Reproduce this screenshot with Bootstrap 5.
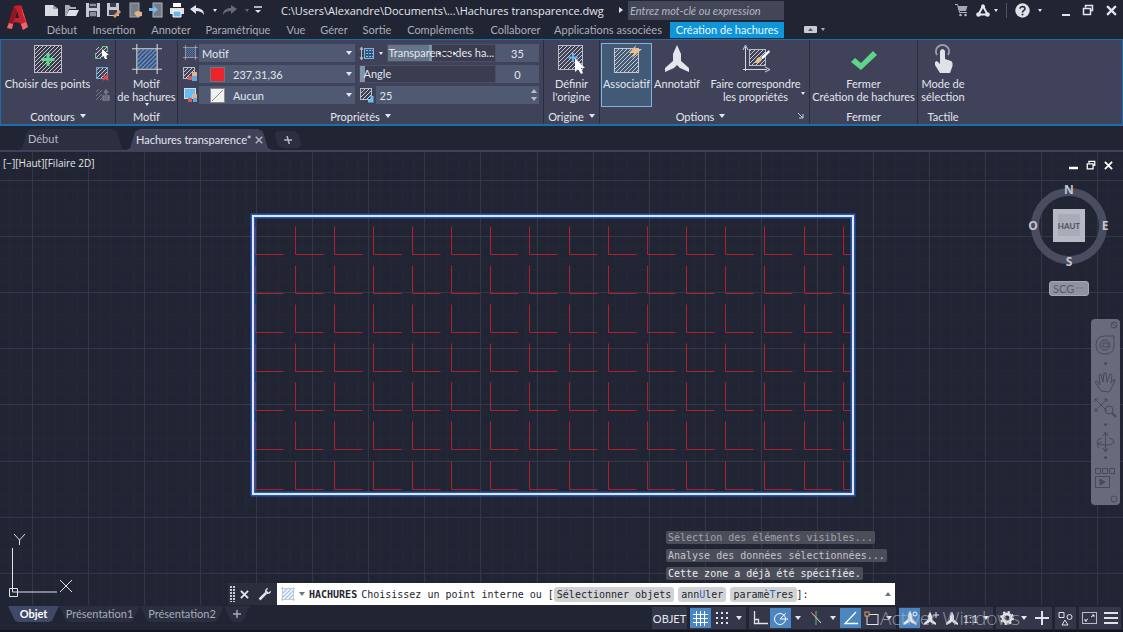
<!DOCTYPE html>
<html lang="fr">
<head>
<meta charset="utf-8">
<meta name="viewport" content="width=device-width, initial-scale=1">
<title>Hachures transparence.dwg</title>
<link href="https://cdn.jsdelivr.net/npm/bootstrap@5.3.0/dist/css/bootstrap.min.css" rel="stylesheet">
<style>
:root{--dark:#212433;--panel:#3f4258;--field:#4f5972;--txt:#e3e6ec;--dim:#a9aebb;--blue:#1b6fa9}
body{background:var(--dark);color:var(--txt);font-family:Lato,"Open Sans",sans-serif;font-size:11px;line-height:13px}
button,input,select{font:inherit;color:inherit;background:none;border:0;padding:0;margin:0;border-radius:0}
a{color:inherit;text-decoration:none}
svg{display:block;flex:none}
.caret{width:0;height:0;border:3px solid transparent;border-top:4px solid currentColor;border-bottom:0;flex:none}
.caret.sm{border-width:2px;border-top-width:3px;border-bottom:0}
.app-top{height:39px}
.logo-box{width:44px;padding-left:5px}
.title-row{height:20px}
.quick{width:229px;gap:5px}
.doc-title{font-family:"Open Sans","Noto Sans",sans-serif;white-space:nowrap;width:338px}
.search-box{background:#424656;width:156px;height:19px;padding-left:2px;font-style:italic}
.search-box::placeholder{color:#b4b8c0;opacity:1}
.menu-row{height:19px;color:var(--dim)}
.menu-row a{white-space:nowrap;height:16px;line-height:15px;text-align:center}
.menu-row a.on{background:#0f96d8;color:#e8f5fd;width:114px}
.sys{gap:12px;padding-right:6px}
.ribbon{height:87px;background:var(--panel);border:1px solid var(--blue);border-bottom-width:2px}
.pane{border-right:1px solid #2a2d3d;height:84px;flex:none}
.pane-title{height:16px;gap:5px}
.pane-body{height:68px}
.tool{display:flex;flex-direction:column;align-items:center;white-space:nowrap;padding-top:4px;text-align:center}
.tool svg{margin-bottom:3px}
.opts{padding:3px 0 0 1px}
.opts .tool{padding-top:1px}
.opts .tool.on{background:#435a77;border:1px solid #7fb4e2;height:64px;padding-top:0;width:51px}
.field{background:var(--field);height:18px}
.pick{appearance:none;height:18px;background:var(--field);padding:0 3px;width:100%}
.drop{position:relative;display:flex;align-items:center;flex:1 1 0}
.drop .caret{position:absolute;right:3px;top:7px}
.prop-row{height:18px;margin-bottom:3px}
.swatch{width:15px;height:15px;margin-left:11px;flex:none}
.slide{position:relative;height:18px;background:#3a3c50;border:1px solid #4b4f66;flex:1 1 0;min-width:0;overflow:hidden}
.slide input{appearance:none;position:absolute;inset:0;width:100%;height:16px}
.slide input::-webkit-slider-thumb{appearance:none;width:5px;height:16px;background:#7f93ab}
.slide label{position:relative;pointer-events:none;white-space:nowrap;line-height:15px;padding-left:1px}
.slide .fill{position:absolute;top:0;left:0;height:100%;background:#667489}
.slide .grab{position:absolute;top:0;left:48px;pointer-events:none}
.num{background:var(--field);height:18px;text-align:center;width:43px;flex:none}
.file-tabs{height:26px;border-bottom:2px solid var(--panel);padding-left:18px}
.file-tabs .ftab{height:21px;align-self:end;line-height:19px;white-space:nowrap;background:#2c2f40;clip-path:polygon(0 100%,4px 92%,9px 12%,14px 0,calc(100% - 14px) 0,calc(100% - 9px) 12%,calc(100% - 4px) 92%,100% 100%)}
.file-tabs .ftab.on{background:var(--panel)}
.file-tabs .ftab.add{clip-path:none;height:17px;margin-bottom:2px;border-radius:5px;transform:skewX(15deg)}
.space{position:relative;flex:1 1 0;min-height:0;overflow:hidden}
.space>.draw{position:absolute;inset:0;width:100%;height:100%}
.view-label{position:absolute;left:3px;top:5px;font-family:"Open Sans",sans-serif;font-size:10px}
.win-btns{position:absolute;right:10px;top:8px;gap:8px}
.compass{position:absolute;right:11px;top:25px}
.scg{position:absolute;right:34px;top:129px;width:40px;height:15px;border-radius:3px;background:#90929f;border:1px solid #a6a8b2;color:#555968;line-height:12px;text-align:left;padding-left:3px}
.navbox{position:absolute;right:3px;top:167px;width:29px;border-radius:4px;background:#686b7b}
.mono{font-family:"DejaVu Sans Mono","Liberation Mono",monospace;font-size:10px}
.cmd-wrap{position:absolute;left:228px;right:228px;bottom:0}
.hist{padding-left:438px;gap:5px;margin-bottom:3px}
.hist span{background:#4b4d59;border-radius:2px;height:13px;line-height:13px;padding:0 2px;white-space:pre}
.cmd{height:22px;background:#2b2e3c;gap:5px;padding-left:2px}
.cmd-line{background:#fff;color:#23262f;height:22px;white-space:pre;padding-left:4px}
.cmd-line button{background:#d2d3d5;border-radius:3px;padding:0 3px;height:15px;line-height:13px}
.cmd-line i{font-style:normal;color:#2c66c4}
.flip{transform:rotate(180deg)}
.foot{height:27px;border-bottom:2px solid #14151f}
.ltab{height:16px;line-height:15px;margin-top:1px;background:#2b2e3e;color:#a6acb9;clip-path:polygon(0 0,100% 0,calc(100% - 7px) 92%,calc(100% - 10px) 100%,10px 100%,7px 92%)}
.ltab.on{background:#3f4965;color:#fff;font-weight:700}
.stat{position:relative;padding-top:2px;margin-right:2px;gap:3px}
.grp{background:#34374a;height:22px;display:flex;align-items:center}
.grp button{height:20px;width:21px;display:flex;align-items:center;justify-content:center;flex:none}
.grp button.on{background:#4c86c0}
.grp button.nar{width:14px}
.grp button.mid{width:17px}
.grp button.wide{width:35px}
.water{position:absolute;left:228px;top:2px;font-family:"Open Sans",sans-serif;font-weight:300;font-size:19px;line-height:22px;color:#b2b5bb;opacity:.75;white-space:nowrap;pointer-events:none}
</style>
</head>
<body class="vh-100 d-flex flex-column overflow-hidden">
<svg width="0" height="0" class="position-absolute" aria-hidden="true">
  <defs>
    <pattern id="ht" width="4" height="4" patternUnits="userSpaceOnUse"><path d="M-1 5L5-1M-1 1L1-1M3 5L5 3" stroke="#c9ccd3" stroke-width="1"/></pattern>
    <pattern id="hb" width="4" height="4" patternUnits="userSpaceOnUse"><path d="M-1 5L5-1M-1 1L1-1M3 5L5 3" stroke="#5d9be0" stroke-width="1.3"/></pattern>
    <symbol id="boxh" viewBox="0 0 30 30"><rect x="1.5" y="1.5" width="27" height="27" fill="#3a3c4d"/><rect x="1.5" y="1.5" width="27" height="27" fill="url(#ht)" stroke="#b9bcc4"/></symbol>
    <symbol id="minih" viewBox="0 0 16 16"><rect x="1.5" y="1.5" width="11" height="11" fill="url(#ht)" stroke="#b9bcc4"/></symbol>
    <symbol id="frame" viewBox="0 0 28 28"><rect x="5" y="5" width="18" height="18" fill="url(#hb)"/><path d="M4.500 0V28M23.500 0V28M0 4.500H28M0 23.500H28" stroke="#d5d8de"/></symbol>
    <symbol id="annot" viewBox="0 0 26 30"><path d="M13 1L17 10V17L25 24V28L16 24L13 21L10 24L1 28V24L9 17V10Z" fill="currentColor"/></symbol>
    <symbol id="floppy" viewBox="0 0 16 16"><path d="M1 1H15V15H1Z" fill="#c5c8d0"/><path d="M4 1H12V6H4ZM4 9H12V15H4Z" fill="#3b3e4c"/><path d="M5 11H11M5 13H11M5 3H11" stroke="#dfe2e8"/></symbol>
    <symbol id="rest" viewBox="0 0 12 12"><path d="M3.500 3.500V1.500H10.500V6.500H8.500M1.500 4.500H8.500V10.500H1.500Z" fill="none" stroke="currentColor" stroke-width="1.5"/></symbol>
    <symbol id="ex" viewBox="0 0 10 10"><path d="M1 1L9 9M9 1L1 9" stroke="currentColor" stroke-width="2"/></symbol>
  </defs>
</svg>

<header class="app-top d-flex">
  <div class="logo-box pt-1">
    <svg width="26" height="28" viewBox="0 0 26 28"><path d="M9 2L16 1L23 23L18 26L15 19L9 18L7 25L2 24Z" fill="#c5202b"/><path d="M12 7L14 14L10 14Z" fill="#212433"/><path d="M9 2L12 7L8 19L2 24Z" fill="#8f1620"/><path d="M16 1L18 11L23 23L20 14Z" fill="#ef5a5f"/><path d="M2 24L4 19L8 20L7 25ZM18 26L16 20L21 18L23 23Z" fill="#e06a6f"/></svg>
  </div>
  <div class="flex-grow-1">
    <div class="title-row d-flex align-items-center">
      <div class="quick d-flex align-items-center">
        <button aria-label="Nouveau"><svg width="15" height="16" viewBox="0 0 15 16"><path d="M1 3H9L14 7V14H1Z" fill="#d9dbe0"/><path d="M9 3V7H14Z" fill="#9da0aa"/></svg></button>
        <button aria-label="Ouvrir"><svg width="16" height="16" viewBox="0 0 16 16"><path d="M1 14V3H5L7 5H12V7H5L2 14Z" fill="#a9acb5"/><path d="M5 8H15L12 14H2Z" fill="#dfe1e6"/></svg></button>
        <button aria-label="Enregistrer"><svg width="16" height="16"><use href="#floppy"/></svg></button>
        <button aria-label="Enregistrer sous"><svg width="16" height="16" viewBox="0 0 16 16"><path d="M1 1H13V14H1Z" fill="#c5c8d0"/><path d="M4 1H10V5H4ZM3 8H11V13H3Z" fill="#3b3e4c"/><path d="M7 14L13 8L15 10L9 16Z" fill="#d9a066"/></svg></button>
        <button aria-label="Ouvrir du mobile"><svg width="16" height="16" viewBox="0 0 16 16"><rect x="3" y="1" width="9" height="14" fill="#777b88" stroke="#a4a8b2"/><path d="M7 11L10 9L15 10V14L10 15Z" fill="#e0b48a"/></svg></button>
        <button aria-label="Enregistrer sur mobile"><svg width="16" height="16" viewBox="0 0 16 16"><rect x="5" y="1" width="9" height="14" fill="#777b88" stroke="#b4b8c0"/><path d="M1 6H6V4L10 7.500L6 11V9H1Z" fill="#6cc0f0"/></svg></button>
        <button aria-label="Imprimer"><svg width="16" height="16" viewBox="0 0 16 16"><path d="M4 1H12V5H4Z" fill="#fff"/><path d="M1 6H15V12H1Z" fill="#dfe1e6"/><path d="M4 9H12V15H4Z" fill="#6cb4ea" stroke="#fff"/></svg></button>
        <button class="d-flex align-items-center gap-2" aria-label="Annuler"><svg width="15" height="14" viewBox="0 0 15 14"><path d="M0 6L6 2V5C11 5 14 7 14 12C12 9 10 8 6 8V11Z" fill="#dfe2e8"/></svg><span class="caret sm"></span></button>
        <button class="d-flex align-items-center gap-2" style="color:#656977" aria-label="Rétablir"><svg width="15" height="14" viewBox="0 0 15 14"><path d="M15 6L9 2V5C4 5 1 7 1 12C3 9 5 8 9 8V11Z" fill="currentColor"/></svg><span class="caret sm"></span></button>
        <button aria-label="Personnaliser"><svg width="8" height="8" viewBox="0 0 8 8"><path d="M0 1H8" stroke="#dfe2e8" stroke-width="1.5"/><path d="M1 4H7L4 7Z" fill="#dfe2e8"/></svg></button>
      </div>
      <div class="doc-title ms-2">C:\Users\Alexandre\Documents\...\Hachures transparence.dwg</div>
      <svg width="5" height="8" viewBox="0 0 5 8"><path d="M0 1L4 4L0 7Z" fill="#dfe2e8"/></svg>
      <input class="search-box ms-1" type="text" placeholder="Entrez mot-clé ou expression" aria-label="Recherche">
      <div class="sys ms-auto d-flex align-items-center">
        <div class="d-flex align-items-center me-2">
          <button class="me-2" aria-label="Boutique"><svg width="13" height="14" viewBox="0 0 13 14"><path d="M0 1.500H2.500L4.500 9.500H12" fill="none" stroke="#b4b7c0"/><path d="M3 3H12.500L11 8H4.500Z" fill="#a5a8b2"/><circle cx="5.500" cy="12" r="1.300" fill="#b4b7c0"/><circle cx="10.500" cy="12" r="1.300" fill="#b4b7c0"/></svg></button>
          <button class="d-flex align-items-center" aria-label="Connexion"><svg width="14" height="13" viewBox="0 0 14 13"><path d="M7 2L2.500 10.500H11.500Z" fill="none" stroke="#e4e6ea" stroke-width="2"/><circle cx="7" cy="2.500" r="2" fill="#e4e6ea"/><circle cx="2.500" cy="10.500" r="2.300" fill="#e4e6ea"/><circle cx="11.500" cy="10.500" r="2.300" fill="#e4e6ea"/></svg><span class="caret sm ms-1"></span></button>
          <span class="vr mx-2"></span>
          <button class="d-flex align-items-center gap-2" aria-label="Aide"><svg width="15" height="15" viewBox="0 0 15 15"><circle cx="7.500" cy="7.500" r="7.200" fill="#dfe2e8"/><path d="M5 5.800C5 2.800 10 3 10 5.700C10 7.500 7.500 7.500 7.500 9.500" fill="none" stroke="#2b2e3c" stroke-width="1.600"/><circle cx="7.500" cy="11.600" r="1" fill="#2b2e3c"/></svg><span class="caret sm"></span></button>
        </div>
        <button aria-label="Réduire"><svg width="8" height="12" viewBox="0 0 8 12"><path d="M0 11H8" stroke="#dfe2e8" stroke-width="2"/></svg></button>
        <button aria-label="Restaurer"><svg width="12" height="12"><use href="#rest"/></svg></button>
        <button aria-label="Quitter"><svg width="11" height="11"><use href="#ex"/></svg></button>
      </div>
    </div>
    <nav class="menu-row d-flex align-items-center">
      <a href="#" style="width:36px">Début</a><a href="#" style="width:68px">Insertion</a><a href="#" style="width:46px">Annoter</a><a href="#" style="width:88px">Paramétrique</a><a href="#" style="width:28px">Vue</a><a href="#" style="width:48px">Gérer</a><a href="#" style="width:38px">Sortie</a><a href="#" style="width:89px">Compléments</a><a href="#" style="width:61px">Collaborer</a><a href="#" style="width:124px">Applications associées</a>
      <a href="#" class="on">Création de hachures</a>
      <button class="d-flex align-items-center ms-3 gap-1" aria-label="Réduire le ruban"><svg class="ms-1" width="13" height="7" viewBox="0 0 13 7"><rect width="13" height="7" rx="1" fill="#c9ccd2"/><path d="M4 5L6.500 2L9 5Z" fill="#555"/></svg><span class="caret sm"></span></button>
    </nav>
  </div>
</header>

<section class="ribbon d-flex">
  <div class="pane" style="width:115px">
    <div class="pane-body d-flex">
      <button class="tool" style="width:93px"><svg width="30" height="30"><use href="#boxh"/><path d="M15 9V22M8.500 15.500H21.500" stroke="#62d68c" stroke-width="3"/></svg>Choisir des points</button>
      <div class="d-flex flex-column gap-1 pt-1">
        <button aria-label="Sélectionner"><svg width="17" height="17" viewBox="0 0 17 17"><rect x="2" y="3" width="11" height="11" fill="url(#ht)"/><path d="M13.500 8V2.500H8M1.500 9V14.500H7" fill="none" stroke="#5fce85"/><path d="M8 5L15 11H12L13 15L11 15L10 12L8 13Z" fill="#fff"/></svg></button>
        <button aria-label="Supprimer"><svg width="17" height="17" viewBox="0 0 17 17"><rect x="2.500" y="2.500" width="11" height="11" fill="url(#ht)" stroke="#6aa3dd"/><path d="M9 10L14 15M14 10L9 15" stroke="#e5484d" stroke-width="2"/></svg></button>
        <button aria-label="Recréer" disabled><svg width="17" height="17" viewBox="0 0 17 17" opacity=".4"><rect x="2" y="3" width="6" height="11" fill="url(#ht)"/><path d="M9 10H15V14H9ZM9 12H15M12 9V5M10 7L12 4L14 7" fill="none" stroke="#c9ccd3" stroke-width="1.500"/></svg></button>
      </div>
    </div>
    <div class="pane-title d-flex align-items-center justify-content-center">Contours<span class="caret"></span></div>
  </div>
  <div class="pane" style="width:62px">
    <button class="tool pane-body w-100"><svg width="30" height="30"><use href="#frame"/></svg>Motif<br>de hachures<span class="caret sm"></span></button>
    <div class="pane-title d-flex align-items-center justify-content-center">Motif</div>
  </div>
  <div class="pane" style="width:366px">
    <div class="pane-body d-flex pt-1 px-1">
      <div style="width:173px">
        <div class="prop-row d-flex align-items-center"><svg width="17" height="16"><use href="#frame" x="1" width="15" height="15"/></svg><div class="field drop"><select class="pick" aria-label="Type de hachures"><option>Motif</option></select><span class="caret"></span></div></div>
        <div class="prop-row d-flex align-items-center"><svg width="17" height="16"><use href="#minih" width="16" height="16"/><rect x="6" y="10" width="4" height="4" fill="#c96258"/><rect x="10" y="6" width="5" height="4" fill="#e0b48a"/><rect x="10" y="10" width="5" height="5" fill="#65a4dc"/></svg><div class="field drop"><span class="swatch border border-secondary" style="background:#ee2329"></span><select class="pick ps-2" aria-label="Couleur des hachures"><option>237,31,36</option></select><span class="caret"></span></div></div>
        <div class="prop-row d-flex align-items-center"><svg width="17" height="16"><rect x="2.500" y="1.500" width="11" height="10" fill="#69bdf0" stroke="#c9dff0"/><rect x="6" y="11" width="4" height="4" fill="#c96258"/><rect x="10" y="7" width="5" height="4" fill="#e0b48a"/><rect x="11" y="11" width="4" height="4" fill="#65a4dc"/></svg><div class="field drop"><svg class="swatch"><rect x=".5" y=".5" width="14" height="14" fill="#f1f1f1" stroke="#888"/><path d="M2 13L13 2" stroke="#888"/></svg><select class="pick ps-2" aria-label="Couleur d'arrière-plan"><option>Aucun</option></select><span class="caret"></span></div></div>
      </div>
      <div class="ps-1" style="width:185px">
        <div class="prop-row d-flex align-items-center"><svg width="16" height="15"><path d="M2.500 2V13M1 4L2.500 1L4 4M1 11L2.500 14L4 11" fill="none" stroke="#b9bcc4"/><rect x="5.500" y="2.500" width="9" height="10" fill="#33527c" stroke="#7fb4e2"/><path d="M7 4.500H14M7 7.500H14M7 10.500H14" stroke="#8ebfec" stroke-dasharray="2 1"/></svg><span class="caret sm mx-1"></span>
          <div class="slide"><input id="tr" type="range" min="0" max="90" value="35"><span class="fill" style="width:39%"></span><label for="tr">Transparence des ha...</label><svg class="grab" width="22" height="16"><path d="M5 6V11L1 8.500ZM17 6V11L21 8.500Z" fill="#fff" stroke="#222" stroke-width=".5"/><path d="M6 8.500H16" stroke="#222" stroke-width="2" stroke-dasharray="3 2"/></svg></div>
          <input class="num" type="text" value="35" aria-label="Transparence"></div>
        <div class="prop-row d-flex"><div class="slide"><input id="an" type="range" min="0" max="359" value="0"><label for="an" class="ps-1">Angle</label></div><input class="num" type="text" value="0" aria-label="Valeur de l'angle"></div>
        <div class="prop-row d-flex align-items-center"><svg width="17" height="16"><use href="#minih" width="16" height="16"/><path d="M9 14H13V9" fill="none" stroke="#69bdf0" stroke-width="3"/></svg><input class="field flex-grow-1 ps-1" style="min-width:0" type="text" value="25" aria-label="Échelle"><span class="d-flex flex-column gap-1 align-items-center field justify-content-center" style="width:10px;color:#b9bcc4"><span class="caret flip"></span><span class="caret"></span></span></div>
      </div>
    </div>
    <div class="pane-title d-flex align-items-center justify-content-center">Propriétés<span class="caret"></span></div>
  </div>
  <div class="pane" style="width:56px">
    <button class="tool pane-body w-100"><svg width="30" height="30"><rect x="1.500" y="1.500" width="24" height="24" fill="url(#ht)" stroke="#b9bcc4"/><path d="M16 9V18M11.500 13.500H20.500" stroke="#5fb7f0" stroke-width="2"/><path d="M18 14L28 24L24 24L26 29L24 30L21 25L18 28Z" fill="#fff"/></svg>Définir<br>l'origine</button>
    <div class="pane-title d-flex align-items-center justify-content-center">Origine<span class="caret"></span></div>
  </div>
  <div class="pane" style="width:210px">
    <div class="pane-body opts d-flex">
      <button class="tool on"><svg width="30" height="30"><rect x="2.500" y="4.500" width="24" height="24" fill="url(#ht)" stroke="#c3c7ce"/><path d="M17 9L24 1L23 5L30 5L20 14L22 9Z" fill="#eac08a"/></svg>Associatif</button>
      <button class="tool" style="width:50px"><svg width="26" height="30"><use href="#annot"/></svg>Annotatif</button>
      <button class="tool position-relative flex-grow-1"><svg width="30" height="30"><path d="M4.500 27V3M2 6L4.500 1L7 6M2 25.500H26M24 23L29 25.500L24 28" fill="none" stroke="#d5d8de"/><rect x="8.500" y="5.500" width="16" height="16" fill="url(#ht)" stroke="#b9bcc4"/><path d="M20 13L28 6L29 8L22 15Z" fill="#fff"/><path d="M14 19C16 12 20 12 21 15C20 19 17 19 14 19Z" fill="#eac08a"/></svg>Faire correspondre<br>les propriétés<span class="caret sm position-absolute end-0 top-50 mt-3 me-1"></span></button>
    </div>
    <div class="pane-title d-flex align-items-center justify-content-center position-relative pe-2">Options<span class="caret"></span><svg class="position-absolute end-0 me-1" width="8" height="8"><path d="M1 1L6 6M6 2V6H2" fill="none" stroke="#c9ccd3"/></svg></div>
  </div>
  <div class="pane" style="width:108px">
    <button class="tool pane-body w-100"><svg width="30" height="30"><path d="M2 18L6 14L12 19L24 7L28 11L12 26Z" fill="#5fd58a"/></svg>Fermer<br>Création de hachures</button>
    <div class="pane-title d-flex align-items-center justify-content-center">Fermer</div>
  </div>
  <div class="pane border-0" style="width:50px">
    <button class="tool pane-body w-100"><svg width="24" height="30"><path d="M6 11A6.500 6.500 0 1 1 17 11" fill="none" stroke="#9da0ab" stroke-width="2"/><path d="M9 7Q11.500 3 14 7V15L20 17Q22 18 21.500 22L19 29H9L4 21V18L6 17L9 20Z" fill="#dfe2e6"/></svg>Mode de<br>sélection</button>
    <div class="pane-title d-flex align-items-center justify-content-center">Tactile</div>
  </div>
</section>

<nav class="file-tabs d-flex">
  <a href="#" class="ftab" style="width:108px;padding-left:10px;color:#b6bac5">Début</a>
  <div class="ftab on d-flex align-items-center" style="width:146px;padding-left:10px"><a href="#">Hachures transparence*</a><button class="ms-1" aria-label="Fermer l'onglet"><svg width="8" height="8" color="#aeb2bd"><use href="#ex"/></svg></button></div>
  <button class="ftab add ms-1" style="width:24px" aria-label="Nouvel onglet"><svg class="mx-auto" width="8" height="8"><path d="M4 0V8M0 4H8" stroke="#b6bac5" stroke-width="1.500"/></svg></button>
</nav>

<main class="space">
  <svg class="draw">
    <defs>
      <pattern id="minor" x="32" y="28" width="11.210" height="11.210" patternUnits="userSpaceOnUse"><path d="M.5 0V12M0 .5H12" stroke="#232737"/></pattern>
    </defs>
    <rect width="100%" height="100%" fill="#212533"/><rect width="100%" height="100%" fill="url(#minor)"/>
    <path id="major" stroke="#323647" fill="none"/>
    <path id="hatch" stroke="#b01f2b" fill="none"/>
    <rect x="253" y="64" width="600" height="278" fill="none" stroke="#2458b0" stroke-width="5"/>
    <rect x="253" y="64" width="600" height="278" fill="none" stroke="#dfe5f2" stroke-width="2"/>
    <path d="M12.500 396V440H57M9.500 436.500H17.500V444.500H9.500Z" stroke="#dfe2e8" fill="none"/>
    <path d="M14 382L19.500 388L25 382M19.500 388V393M60 428L72 440M72 428L60 440" stroke="#dfe2e8" fill="none"/>
  </svg>
  <div class="view-label">[−][Haut][Filaire 2D]</div>
  <div class="win-btns d-flex align-items-center text-white">
    <button aria-label="Réduire la vue"><svg width="9" height="10"><path d="M0 8H9" stroke="#fff" stroke-width="2.500"/></svg></button>
    <button aria-label="Restaurer la vue"><svg width="10" height="10"><use href="#rest"/></svg></button>
    <button aria-label="Fermer la vue"><svg width="9" height="9"><use href="#ex"/></svg></button>
  </div>
  <svg class="compass" width="86" height="98" viewBox="0 -6 86 98" font-family="Open Sans, sans-serif" font-weight="700" font-size="12" fill="#c3c6d0" text-anchor="middle">
    <circle cx="43" cy="43" r="34" fill="none" stroke="#4a4d60" stroke-width="8"/>
    <rect x="27" y="26" width="32" height="33" fill="#b7bac5"/><rect x="32" y="31" width="22" height="22" fill="#a9acb8"/>
    <text x="43" y="46" font-size="8" font-family="Lato, sans-serif" fill="#4c505f">HAUT</text>
    <text x="43" y="11">N</text><text x="43" y="83">S</text><text x="7" y="47">O</text><text x="79" y="47">E</text>
  </svg>
  <button class="scg">SCG <svg class="position-absolute end-0 top-0 m-1" width="8" height="5"><path d="M0 2H8" stroke="#777b88"/></svg></button>
  <div class="navbox">
    <svg width="29" height="186" viewBox="0 0 29 186" fill="none" stroke="#474a5a">
      <circle cx="23" cy="6" r="3"/><path d="M21 4L25 8"/><circle cx="23" cy="180" r="3"/>
      <path d="M14 17H23V26Q23 35 14 35Q5 35 5 26Q5 17 14 17"/><circle cx="14" cy="26" r="5"/><path d="M14 24H17V28H12V24Z"/>
      <path d="M13 44H16L14.500 46ZM13 105H16L14.500 107ZM13 138H16L14.500 140Z" fill="#474a5a"/>
      <path d="M10 72L4 63L6 62L9 66L8 56L10 55L12 63L13 54L15 54L16 63L19 55L21 56L20 64L23 60L24 62L20 70L18 73Z"/>
      <path d="M4 80L16 92M4 92L16 80M4 83V80H7M13 80H16V83M4 89V92H7"/><circle cx="18" cy="91" r="4"/><path d="M21 94L25 98" stroke-width="2"/>
      <path d="M14.500 132V114M12 117L14.500 113L17 117M12 129L14.500 133L17 129M18 119Q23 120 23 123Q22 126 14 126Q6 126 6 123Q6 120 11 119M8 129L6 125L11 123"/>
      <path d="M4.500 149.500H9.500V154.500H4.500ZM11.500 149.500H16.500V154.500H11.500ZM18.500 149.500H23.500V154.500H18.500ZM4.500 157.500H18.500V168.500H4.500Z"/><path d="M9 160L14 163L9 166Z" fill="#474a5a"/>
    </svg>
  </div>
  <div class="cmd-wrap mono">
    <div class="hist d-flex flex-column align-items-start">
      <span style="color:#a0a3ab">Sélection des éléments visibles...</span><span style="color:#c3c5ca">Analyse des données sélectionnées...</span><span style="color:#eceded">Cette zone a déjà été spécifiée.</span>
    </div>
    <div class="cmd d-flex align-items-center">
      <svg width="5" height="16"><path d="M1 0V16M4 0V16" stroke="#c9ccd3" stroke-width="2" stroke-dasharray="2 1"/></svg>
      <button aria-label="Fermer la ligne de commande"><svg width="9" height="9"><use href="#ex"/></svg></button>
      <button class="ms-1" aria-label="Personnaliser"><svg width="14" height="14" viewBox="0 0 14 14"><path d="M1.500 12.500L8 6" stroke="#dfe2e8" stroke-width="2.500"/><path d="M10.500 1Q7 1 7 4.500Q7 7 9.500 7Q13 7 13 3.500L10.500 5.500L8.500 3.500Z" fill="#dfe2e8"/></svg></button>
      <div class="cmd-line flex-grow-1 d-flex align-items-center">
        <svg width="14" height="14" viewBox="0 0 14 14"><rect x="2" y="2" width="10" height="10" fill="url(#hb)" opacity=".6"/><path d="M1.500 0V14M12.500 0V14M0 1.500H14M0 12.500H14" stroke="#c3ccd6"/></svg><span class="caret text-secondary mx-1"></span><b>HACHURES</b><span class="ms-1">Choisissez un point interne ou [</span><button>Sélectionner objets</button><button class="ms-1">ann<i>U</i>ler</button><button class="ms-1">paramè<i>T</i>res</button><span>]:</span><span class="caret ms-auto me-1 flip text-secondary"></span>
      </div>
    </div>
  </div>
</main>

<footer class="foot d-flex">
  <nav class="d-flex ps-2">
    <a href="#" class="ltab on text-center" style="width:51px">Objet</a><a href="#" class="ltab text-center" style="width:81px">Présentation1</a><a href="#" class="ltab text-center" style="width:84px">Présentation2</a><button class="ltab" style="width:26px" aria-label="Nouvelle présentation"><svg class="mx-auto" width="8" height="8"><path d="M4 0V8M0 4H8" stroke="#a4a9b6" stroke-width="1.500"/></svg></button>
  </nav>
  <div class="stat d-flex ms-auto">
    <div class="grp"><button class="wide">OBJET</button></div>
    <div class="grp"><button class="on" aria-label="Grille"><svg width="15" height="15"><path d="M3.500 0V15M7.500 0V15M11.500 0V15M0 3.500H15M0 7.500H15M0 11.500H15" stroke="#fff"/></svg></button><button aria-label="Accrochage"><svg width="12" height="12"><path d="M0 1H12M0 6H12M0 11H12" stroke="#dfe2e8" stroke-width="2" stroke-dasharray="2 3"/></svg></button><button class="nar" aria-label="Options d'accrochage"><span class="caret"></span></button></div>
    <div class="grp"><button aria-label="Ortho"><svg width="16" height="14"><path d="M2.500 0V12.500H16M2.500 8.500H6.500V12" fill="none" stroke="#dfe2e8" stroke-width="1.300"/></svg></button><button class="on" aria-label="Repérage polaire"><svg width="15" height="15"><circle cx="7" cy="8" r="5.500" fill="none" stroke="#fff"/><path d="M7 8H15M7 8L13 2" stroke="#fff"/></svg></button><button class="nar" aria-label="Options polaires"><span class="caret"></span></button><button aria-label="Dessin isométrique"><svg width="14" height="16"><path d="M7 1V15" stroke="#52c27c"/><path d="M2 2L12 13" stroke="#dfe2e8"/><path d="M2 2L6 7" stroke="#e5484d"/></svg></button><button class="nar" aria-label="Options isométriques"><span class="caret"></span></button><button class="on" aria-label="Repérage aux objets"><svg width="16" height="14"><path d="M13 1L2 12.500H15" fill="none" stroke="#fff" stroke-width="1.300"/></svg></button><button aria-label="Accrochage aux objets"><svg width="16" height="15"><rect x="3" y="3.500" width="11" height="10" fill="none" stroke="#dfe2e8"/><rect x="1" y="1" width="4" height="4" fill="#34374a" stroke="#d9a066"/></svg></button><button class="nar" aria-label="Options d'objets"><span class="caret"></span></button></div>
    <div class="grp"><button class="on" aria-label="Visibilité des annotations"><svg width="16" height="16"><use href="#annot"/><circle cx="13" cy="4" r="2" fill="none" stroke="#fff"/></svg></button><button aria-label="Échelles automatiques"><svg width="16" height="15"><use href="#annot" width="14"/><path d="M13 1V7M10 4H16" stroke="#dfe2e8"/></svg></button><button aria-label="Annotation"><svg width="14" height="15"><use href="#annot"/></svg></button><button class="mid">1:1</button><button class="nar" aria-label="Échelle d'annotation"><span class="caret"></span></button></div>
    <div class="grp"><button aria-label="Espace de travail"><svg width="14" height="14"><circle cx="7" cy="7" r="4" fill="none" stroke="#dfe2e8" stroke-width="3"/><circle cx="7" cy="7" r="6" fill="none" stroke="#dfe2e8" stroke-width="2" stroke-dasharray="2.300 2.400"/></svg></button><button class="nar" aria-label="Options d'espace"><span class="caret"></span></button><button aria-label="Moniteur d'annotation"><svg width="14" height="14"><path d="M7 0V14M0 7H14" stroke="#dfe2e8" stroke-width="2"/></svg></button></div>
    <div class="grp"><button aria-label="Isoler les objets"><svg width="15" height="15"><path d="M1 1.500H6V6.500H1ZM7 9L10 14H4Z" fill="none" stroke="#dfe2e8"/><circle cx="11.500" cy="6" r="2.500" fill="none" stroke="#dfe2e8"/></svg></button></div>
    <div class="grp"><button aria-label="Plein écran"><svg width="15" height="12"><rect x=".5" y=".5" width="14" height="11" fill="none" stroke="#b9bcc4"/><path d="M3 9L6 7M9 5L12 3M3 7V9H5M10 3H12V5" fill="none" stroke="#dfe2e8"/></svg></button><button aria-label="Personnalisation"><svg width="14" height="12"><path d="M0 1H14M0 6H14M0 11H14" stroke="#dfe2e8" stroke-width="2"/></svg></button></div>
    <span class="water">Activer Windows</span>
  </div>
</footer>
<script src="https://cdn.jsdelivr.net/npm/bootstrap@5.3.0/dist/js/bootstrap.bundle.min.js"></script>
<script>
// Major grid lines of the drawing space
let grid = '';
for (let i = 0; i < 60; i++) grid += `M${Math.round(32 + i * 56.06) + .5} 0V3000M0 ${Math.round(28 + i * 56.1) + .5}H4000`;
document.getElementById('major').setAttribute('d', grid);
// Hatch motif: one L per cell, clipped at the right edge of the rectangle
let d = '';
for (let r = 0; r < 7; r++) for (let c = 0; c < 16; c++) {
  const x = Math.floor(255.9 + c * 39.15) + .5, y = Math.floor(102.4 + r * 39.1) + .5;
  d += `M${x} ${y - 28}V${y}H${Math.min(x + 28, 852)}`;
}
document.getElementById('hatch').setAttribute('d', d);
</script>
</body>
</html>
